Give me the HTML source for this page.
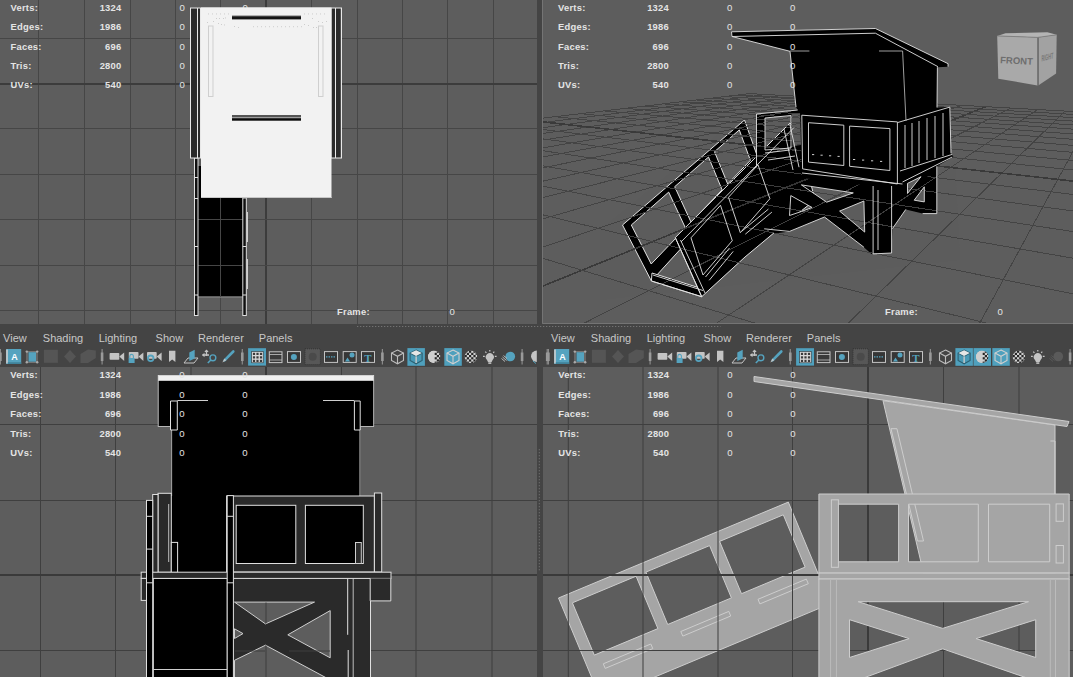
<!DOCTYPE html>
<html><head><meta charset="utf-8">
<style>
html,body{margin:0;padding:0}
body{width:1073px;height:677px;background:#444444;position:relative;overflow:hidden;font-family:"Liberation Sans",sans-serif}
.vp{position:absolute;background:#5d5d5d;overflow:hidden}
svg{position:absolute;left:0;top:0}
.hl{font:bold 9.4px "Liberation Sans",sans-serif;fill:#e4e4e4;letter-spacing:0.25px}
.hz{font:9.6px "Liberation Sans",sans-serif;fill:#e4e4e4}
.mn{font:11px "Liberation Sans",sans-serif;fill:#c8c8c8}
</style></head><body>
<div class="vp" style="left:0;top:0;width:537px;height:324px">
<svg width="537" height="324">
<rect x="38" y="0" width="1" height="324" fill="#464646"/><rect x="84" y="0" width="1" height="324" fill="#464646"/><rect x="130" y="0" width="1" height="324" fill="#464646"/><rect x="175" y="0" width="1" height="324" fill="#464646"/><rect x="220" y="0" width="1" height="324" fill="#464646"/><rect x="265" y="0" width="2" height="324" fill="#3c3c3c"/><rect x="311" y="0" width="1" height="324" fill="#464646"/><rect x="357" y="0" width="1" height="324" fill="#464646"/><rect x="402" y="0" width="1" height="324" fill="#464646"/><rect x="447" y="0" width="1" height="324" fill="#464646"/><rect x="493" y="0" width="1" height="324" fill="#464646"/><rect x="0" y="38" width="537" height="1" fill="#464646"/><rect x="0" y="83" width="537" height="2" fill="#3c3c3c"/><rect x="0" y="128" width="537" height="1" fill="#464646"/><rect x="0" y="174" width="537" height="1" fill="#464646"/><rect x="0" y="219" width="537" height="1" fill="#464646"/><rect x="0" y="265" width="537" height="1" fill="#464646"/><rect x="0" y="310" width="537" height="1" fill="#464646"/>
<text x="10.5" y="10.7" class="hl">Verts:</text><text x="121.5" y="10.7" class="hl" text-anchor="end">1324</text><text x="179.5" y="10.7" class="hz">0</text><text x="242.5" y="10.7" class="hz">0</text><text x="10.5" y="30.1" class="hl">Edges:</text><text x="121.5" y="30.1" class="hl" text-anchor="end">1986</text><text x="179.5" y="30.1" class="hz">0</text><text x="242.5" y="30.1" class="hz">0</text><text x="10.5" y="49.5" class="hl">Faces:</text><text x="121.5" y="49.5" class="hl" text-anchor="end">696</text><text x="179.5" y="49.5" class="hz">0</text><text x="242.5" y="49.5" class="hz">0</text><text x="10.5" y="68.9" class="hl">Tris:</text><text x="121.5" y="68.9" class="hl" text-anchor="end">2800</text><text x="179.5" y="68.9" class="hz">0</text><text x="242.5" y="68.9" class="hz">0</text><text x="10.5" y="88.3" class="hl">UVs:</text><text x="121.5" y="88.3" class="hl" text-anchor="end">540</text><text x="179.5" y="88.3" class="hz">0</text><text x="242.5" y="88.3" class="hz">0</text>
<g id="tlm">
<!-- lower black part (stairs seen from top) -->
<rect x="198" y="160" width="45" height="137.5" fill="#000"/>
<rect x="198" y="296.5" width="45" height="1" fill="#bdbdbd"/>
<rect x="198" y="160" width="3" height="6" fill="#5a5a5a"/>
<!-- grid lines over black -->
<rect x="220" y="198" width="1" height="99" fill="#464646"/>
<rect x="198" y="219" width="45" height="1" fill="#464646"/>
<rect x="198" y="265" width="45" height="1" fill="#464646"/>
<!-- rails -->
<rect x="194.5" y="158" width="3.5" height="157.5" fill="#101010" stroke="#e0e0e0" stroke-width="1"/>
<rect x="194.5" y="177" width="3.5" height="1" fill="#e0e0e0"/>
<rect x="194.5" y="198" width="3.5" height="1" fill="#e0e0e0"/>
<rect x="194.5" y="246" width="3.5" height="1" fill="#e0e0e0"/>
<rect x="194.5" y="294.5" width="3.5" height="1" fill="#e0e0e0"/>
<rect x="242.8" y="198" width="3.5" height="117.5" fill="#101010" stroke="#e0e0e0" stroke-width="1"/>
<rect x="242.8" y="246" width="3.5" height="1" fill="#e0e0e0"/>
<rect x="242.8" y="294.5" width="3.5" height="1" fill="#e0e0e0"/>
<rect x="246.5" y="212" width="1.5" height="30" fill="#cfcfcf"/>
<rect x="246.5" y="259" width="1.5" height="30" fill="#cfcfcf"/>
<!-- roof -->
<rect x="190" y="7.5" width="152" height="151" fill="#e8e8e8"/>
<rect x="191" y="8.5" width="6" height="149" fill="#2a2a2a"/>
<rect x="198" y="8.5" width="2" height="149" fill="#2a2a2a"/>
<rect x="331.5" y="8.5" width="3.5" height="149" fill="#2a2a2a"/>
<rect x="336" y="8.5" width="4.8" height="149" fill="#2a2a2a"/>
<rect x="201" y="7.5" width="130.5" height="190.5" fill="#f2f2f2"/>
<rect x="201" y="197" width="130.5" height="1" fill="#c8c8c8"/>
<rect x="253" y="26.3" width="0.9" height="0.9" fill="#c4c4c4"/><rect x="257" y="26.3" width="0.9" height="0.9" fill="#c4c4c4"/><rect x="261" y="26.3" width="0.9" height="0.9" fill="#c4c4c4"/><rect x="265" y="26.3" width="0.9" height="0.9" fill="#c4c4c4"/><rect x="269" y="26.3" width="0.9" height="0.9" fill="#c4c4c4"/><rect x="273" y="26.3" width="0.9" height="0.9" fill="#c4c4c4"/><rect x="277" y="26.3" width="0.9" height="0.9" fill="#c4c4c4"/><rect x="281" y="26.3" width="0.9" height="0.9" fill="#c4c4c4"/><rect x="285" y="26.3" width="0.9" height="0.9" fill="#c4c4c4"/><rect x="289" y="26.3" width="0.9" height="0.9" fill="#c4c4c4"/><rect x="293" y="26.3" width="0.9" height="0.9" fill="#c4c4c4"/><rect x="297" y="26.3" width="0.9" height="0.9" fill="#c4c4c4"/><rect x="301" y="26.3" width="0.9" height="0.9" fill="#c4c4c4"/><rect x="208" y="13.5" width="0.9" height="0.9" fill="#c4c4c4"/><rect x="212" y="13.5" width="0.9" height="0.9" fill="#c4c4c4"/><rect x="216" y="13.5" width="0.9" height="0.9" fill="#c4c4c4"/><rect x="220" y="13.5" width="0.9" height="0.9" fill="#c4c4c4"/><rect x="224" y="13.5" width="0.9" height="0.9" fill="#c4c4c4"/><rect x="228" y="13.5" width="0.9" height="0.9" fill="#c4c4c4"/><rect x="304" y="13.5" width="0.9" height="0.9" fill="#c4c4c4"/><rect x="308" y="13.5" width="0.9" height="0.9" fill="#c4c4c4"/><rect x="312" y="13.5" width="0.9" height="0.9" fill="#c4c4c4"/><rect x="316" y="13.5" width="0.9" height="0.9" fill="#c4c4c4"/><rect x="320" y="13.5" width="0.9" height="0.9" fill="#c4c4c4"/><rect x="324" y="13.5" width="0.9" height="0.9" fill="#c4c4c4"/><rect x="216" y="18" width="0.9" height="0.9" fill="#c4c4c4"/><rect x="219" y="18" width="0.9" height="0.9" fill="#c4c4c4"/><rect x="223" y="18" width="0.9" height="0.9" fill="#c4c4c4"/><rect x="225" y="17.5" width="0.9" height="0.9" fill="#c4c4c4"/><rect x="207" y="22" width="0.9" height="0.9" fill="#c4c4c4"/><rect x="213" y="21" width="0.9" height="0.9" fill="#c4c4c4"/><rect x="218" y="23" width="0.9" height="0.9" fill="#c4c4c4"/><rect x="221" y="24" width="0.9" height="0.9" fill="#c4c4c4"/><rect x="224" y="24.5" width="0.9" height="0.9" fill="#c4c4c4"/><rect x="234" y="26" width="0.9" height="0.9" fill="#c4c4c4"/><rect x="238" y="27" width="0.9" height="0.9" fill="#c4c4c4"/><rect x="312" y="18" width="0.9" height="0.9" fill="#c4c4c4"/><rect x="318" y="21" width="0.9" height="0.9" fill="#c4c4c4"/><rect x="322" y="22" width="0.9" height="0.9" fill="#c4c4c4"/><rect x="326" y="21" width="0.9" height="0.9" fill="#c4c4c4"/><rect x="304" y="24" width="0.9" height="0.9" fill="#c4c4c4"/><rect x="308" y="25" width="0.9" height="0.9" fill="#c4c4c4"/><rect x="313" y="27" width="0.9" height="0.9" fill="#c4c4c4"/><rect x="316" y="27" width="0.9" height="0.9" fill="#c4c4c4"/>
<rect x="208.5" y="26" width="4.5" height="70.5" fill="#f2f2f2" stroke="#cfcfcf" stroke-width="1"/>
<rect x="318.5" y="26" width="4.5" height="70.5" fill="#f2f2f2" stroke="#cfcfcf" stroke-width="1"/>
<rect x="232" y="15.8" width="69" height="3.6" fill="#151515"/>
<rect x="232" y="15.8" width="69" height="0.7" fill="#6a6a6a"/>
<rect x="232" y="115" width="69" height="2.5" fill="#555"/>
<rect x="232" y="117.5" width="69" height="0.8" fill="#9a9a9a"/>
<rect x="232" y="118.2" width="69" height="2.5" fill="#0a0a0a"/>
</g>

<text x="337" y="315.3" class="hl">Frame:</text><text x="449.5" y="315.3" class="hz">0</text>
</svg></div>
<div class="vp" style="left:542px;top:0;width:531px;height:324px">
<svg width="531" height="324">
<line shape-rendering="crispEdges" x1="207.8" y1="93.6" x2="-874.9" y2="222.0" stroke="#444444" stroke-width="1.0"/><line shape-rendering="crispEdges" x1="223.7" y1="94.5" x2="-887.1" y2="234.6" stroke="#444444" stroke-width="1.0"/><line shape-rendering="crispEdges" x1="240.1" y1="95.4" x2="-901.1" y2="249.2" stroke="#444444" stroke-width="1.0"/><line shape-rendering="crispEdges" x1="257.2" y1="96.4" x2="-917.4" y2="266.2" stroke="#444444" stroke-width="1.0"/><line shape-rendering="crispEdges" x1="274.8" y1="97.4" x2="-936.7" y2="286.2" stroke="#444444" stroke-width="1.0"/><line shape-rendering="crispEdges" x1="293.2" y1="98.4" x2="-959.8" y2="310.2" stroke="#444444" stroke-width="1.0"/><line shape-rendering="crispEdges" x1="312.2" y1="99.4" x2="-987.9" y2="339.5" stroke="#444444" stroke-width="1.0"/><line shape-rendering="crispEdges" x1="332.0" y1="100.5" x2="-1023.0" y2="375.9" stroke="#444444" stroke-width="1.0"/><line shape-rendering="crispEdges" x1="352.6" y1="101.7" x2="-1067.9" y2="422.6" stroke="#444444" stroke-width="1.0"/><line shape-rendering="crispEdges" x1="374.0" y1="102.8" x2="-1127.4" y2="484.5" stroke="#444444" stroke-width="1.0"/><line shape-rendering="crispEdges" x1="396.2" y1="104.1" x2="-1210.2" y2="570.6" stroke="#444444" stroke-width="1.0"/><line shape-rendering="crispEdges" x1="419.5" y1="105.4" x2="-1333.1" y2="698.4" stroke="#444444" stroke-width="1.0"/><line shape-rendering="crispEdges" x1="443.7" y1="106.7" x2="-1534.6" y2="907.9" stroke="#3a3a3a" stroke-width="1.6"/><line shape-rendering="crispEdges" x1="469.0" y1="108.1" x2="-1925.6" y2="1314.5" stroke="#444444" stroke-width="1.0"/><line shape-rendering="crispEdges" x1="495.5" y1="109.6" x2="-1641.5" y2="1531.7" stroke="#444444" stroke-width="1.0"/><line shape-rendering="crispEdges" x1="523.1" y1="111.1" x2="-932.3" y2="1534.7" stroke="#444444" stroke-width="1.0"/><line shape-rendering="crispEdges" x1="552.1" y1="112.7" x2="-223.1" y2="1537.7" stroke="#444444" stroke-width="1.0"/><line shape-rendering="crispEdges" x1="582.5" y1="114.4" x2="486.1" y2="1540.7" stroke="#444444" stroke-width="1.0"/><line shape-rendering="crispEdges" x1="614.3" y1="116.1" x2="1195.3" y2="1543.7" stroke="#444444" stroke-width="1.0"/><line shape-rendering="crispEdges" x1="647.8" y1="118.0" x2="1904.5" y2="1546.7" stroke="#444444" stroke-width="1.0"/><line shape-rendering="crispEdges" x1="683.1" y1="119.9" x2="2613.6" y2="1549.7" stroke="#444444" stroke-width="1.0"/><line shape-rendering="crispEdges" x1="720.2" y1="122.0" x2="3322.8" y2="1552.7" stroke="#444444" stroke-width="1.0"/><line shape-rendering="crispEdges" x1="759.4" y1="124.2" x2="4032.0" y2="1555.7" stroke="#444444" stroke-width="1.0"/><line shape-rendering="crispEdges" x1="800.8" y1="126.5" x2="4741.2" y2="1558.7" stroke="#444444" stroke-width="1.0"/><line shape-rendering="crispEdges" x1="844.6" y1="128.9" x2="5450.4" y2="1561.7" stroke="#444444" stroke-width="1.0"/><line shape-rendering="crispEdges" x1="207.8" y1="93.6" x2="844.6" y2="128.9" stroke="#444444" stroke-width="1.0"/><line shape-rendering="crispEdges" x1="195.7" y1="95.1" x2="858.9" y2="133.3" stroke="#444444" stroke-width="1.0"/><line shape-rendering="crispEdges" x1="182.8" y1="96.6" x2="874.8" y2="138.3" stroke="#444444" stroke-width="1.0"/><line shape-rendering="crispEdges" x1="169.1" y1="98.2" x2="892.7" y2="143.9" stroke="#444444" stroke-width="1.0"/><line shape-rendering="crispEdges" x1="154.4" y1="100.0" x2="913.0" y2="150.2" stroke="#444444" stroke-width="1.0"/><line shape-rendering="crispEdges" x1="138.6" y1="101.8" x2="936.2" y2="157.4" stroke="#444444" stroke-width="1.0"/><line shape-rendering="crispEdges" x1="121.6" y1="103.9" x2="962.9" y2="165.7" stroke="#444444" stroke-width="1.0"/><line shape-rendering="crispEdges" x1="103.3" y1="106.0" x2="994.1" y2="175.4" stroke="#444444" stroke-width="1.0"/><line shape-rendering="crispEdges" x1="83.5" y1="108.4" x2="1030.9" y2="186.8" stroke="#444444" stroke-width="1.0"/><line shape-rendering="crispEdges" x1="62.0" y1="110.9" x2="1075.0" y2="200.5" stroke="#444444" stroke-width="1.0"/><line shape-rendering="crispEdges" x1="38.5" y1="113.7" x2="1128.8" y2="217.3" stroke="#444444" stroke-width="1.0"/><line shape-rendering="crispEdges" x1="12.9" y1="116.7" x2="1195.9" y2="238.2" stroke="#444444" stroke-width="1.0"/><line shape-rendering="crispEdges" x1="-15.2" y1="120.1" x2="1282.1" y2="265.0" stroke="#3a3a3a" stroke-width="1.6"/><line shape-rendering="crispEdges" x1="-46.2" y1="123.7" x2="1396.6" y2="300.6" stroke="#444444" stroke-width="1.0"/><line shape-rendering="crispEdges" x1="-80.6" y1="127.8" x2="1556.3" y2="350.3" stroke="#444444" stroke-width="1.0"/><line shape-rendering="crispEdges" x1="-119.0" y1="132.4" x2="1794.5" y2="424.4" stroke="#444444" stroke-width="1.0"/><line shape-rendering="crispEdges" x1="-162.0" y1="137.5" x2="2187.8" y2="546.7" stroke="#444444" stroke-width="1.0"/><line shape-rendering="crispEdges" x1="-210.6" y1="143.2" x2="2961.2" y2="787.3" stroke="#444444" stroke-width="1.0"/><line shape-rendering="crispEdges" x1="-266.0" y1="149.8" x2="5180.0" y2="1477.6" stroke="#444444" stroke-width="1.0"/><line shape-rendering="crispEdges" x1="-329.6" y1="157.3" x2="4249.9" y2="1556.7" stroke="#444444" stroke-width="1.0"/><line shape-rendering="crispEdges" x1="-403.5" y1="166.1" x2="2973.4" y2="1551.2" stroke="#444444" stroke-width="1.0"/><line shape-rendering="crispEdges" x1="-490.4" y1="176.4" x2="1697.0" y2="1545.8" stroke="#444444" stroke-width="1.0"/><line shape-rendering="crispEdges" x1="-593.9" y1="188.7" x2="420.5" y2="1540.4" stroke="#444444" stroke-width="1.0"/><line shape-rendering="crispEdges" x1="-719.5" y1="203.5" x2="-856.0" y2="1535.0" stroke="#444444" stroke-width="1.0"/><line shape-rendering="crispEdges" x1="-874.9" y1="222.0" x2="-2132.4" y2="1529.6" stroke="#444444" stroke-width="1.0"/>
<g transform="translate(-542,0)"><path d="M622.5 225.0 L744.5 120.0 L759.5 162.4 L651.4 281.0 Z M631.3 225.0 L668.7 192.1 L685.5 228.1 L651.2 264.0 Z M674.7 186.7 L708.5 157.0 L722.1 189.8 L691.1 222.3 Z M714.5 151.7 L739.3 129.9 L750.4 160.3 L727.7 184.0 Z" fill="#000" fill-rule="evenodd" stroke="#e2e2e2" stroke-width="1"/><path d="M651.4 281.0 L701.7 296.7 L703.0 289.0 L652.0 273.0 Z" fill="#000" stroke="#e2e2e2" stroke-width="1"/><path d="M675.3 237.6 L789.7 123.3 L796.0 126.0 L815.0 200.0 L784.4 224.2 L745.0 257.0 L701.7 296.7 Z" fill="#000" stroke="#e2e2e2" stroke-width="1"/><path d="M731.5 31.8 L875.4 28.5 L948.1 63.7 L948.0 66.7 L937.4 67.2 L937.0 107.5 L949.8 107.1 L951.0 153.3 L953.4 156.8 L936.8 166.3 L936.8 213.6 L922.6 213.6 L905.8 209.4 L892.4 228.7 L891.6 253.0 L871.4 253.9 L863.9 247.2 L824.5 217.0 L789.5 231.4 L774.9 233.4 L764.2 228.8 L750.0 236.0 L756.5 165.0 L756.5 114.0 L797.7 110.0 L796.0 107.0 L795.3 100.0 L790.0 51.3 L732.0 36.5 Z M765.0 118.0 L791.0 115.5 L791.0 148.0 L765.0 150.0 Z M801.4 184.9 L853.3 192.9 L826.7 202.2 Z M790.8 195.6 L812.1 207.5 L801.4 211.5 L789.5 215.5 Z M839.6 211.1 L863.9 201.0 L864.7 232.1 Z M907.5 183.4 L921.0 176.7 L907.5 193.5 Z M914.2 200.2 L924.3 186.8 L924.3 201.9 Z" fill="#000" fill-rule="evenodd"/><path d="M791.5 114 L800 113 L801 145 L792.5 146 Z" fill="#5a5a5a"/><clipPath id="lowclip"><path d="M600 230 L760 100 L800 112 L802 178 L905 190 L955 160 L960 260 L600 300 Z"/></clipPath><g clip-path="url(#lowclip)" opacity="0.9"><g transform="translate(542,0)"><line shape-rendering="crispEdges" x1="207.8" y1="93.6" x2="-874.9" y2="222.0" stroke="#444444" stroke-width="1.0"/><line shape-rendering="crispEdges" x1="223.7" y1="94.5" x2="-887.1" y2="234.6" stroke="#444444" stroke-width="1.0"/><line shape-rendering="crispEdges" x1="240.1" y1="95.4" x2="-901.1" y2="249.2" stroke="#444444" stroke-width="1.0"/><line shape-rendering="crispEdges" x1="257.2" y1="96.4" x2="-917.4" y2="266.2" stroke="#444444" stroke-width="1.0"/><line shape-rendering="crispEdges" x1="274.8" y1="97.4" x2="-936.7" y2="286.2" stroke="#444444" stroke-width="1.0"/><line shape-rendering="crispEdges" x1="293.2" y1="98.4" x2="-959.8" y2="310.2" stroke="#444444" stroke-width="1.0"/><line shape-rendering="crispEdges" x1="312.2" y1="99.4" x2="-987.9" y2="339.5" stroke="#444444" stroke-width="1.0"/><line shape-rendering="crispEdges" x1="332.0" y1="100.5" x2="-1023.0" y2="375.9" stroke="#444444" stroke-width="1.0"/><line shape-rendering="crispEdges" x1="352.6" y1="101.7" x2="-1067.9" y2="422.6" stroke="#444444" stroke-width="1.0"/><line shape-rendering="crispEdges" x1="374.0" y1="102.8" x2="-1127.4" y2="484.5" stroke="#444444" stroke-width="1.0"/><line shape-rendering="crispEdges" x1="396.2" y1="104.1" x2="-1210.2" y2="570.6" stroke="#444444" stroke-width="1.0"/><line shape-rendering="crispEdges" x1="419.5" y1="105.4" x2="-1333.1" y2="698.4" stroke="#444444" stroke-width="1.0"/><line shape-rendering="crispEdges" x1="443.7" y1="106.7" x2="-1534.6" y2="907.9" stroke="#3a3a3a" stroke-width="1.6"/><line shape-rendering="crispEdges" x1="469.0" y1="108.1" x2="-1925.6" y2="1314.5" stroke="#444444" stroke-width="1.0"/><line shape-rendering="crispEdges" x1="495.5" y1="109.6" x2="-1641.5" y2="1531.7" stroke="#444444" stroke-width="1.0"/><line shape-rendering="crispEdges" x1="523.1" y1="111.1" x2="-932.3" y2="1534.7" stroke="#444444" stroke-width="1.0"/><line shape-rendering="crispEdges" x1="552.1" y1="112.7" x2="-223.1" y2="1537.7" stroke="#444444" stroke-width="1.0"/><line shape-rendering="crispEdges" x1="582.5" y1="114.4" x2="486.1" y2="1540.7" stroke="#444444" stroke-width="1.0"/><line shape-rendering="crispEdges" x1="614.3" y1="116.1" x2="1195.3" y2="1543.7" stroke="#444444" stroke-width="1.0"/><line shape-rendering="crispEdges" x1="647.8" y1="118.0" x2="1904.5" y2="1546.7" stroke="#444444" stroke-width="1.0"/><line shape-rendering="crispEdges" x1="683.1" y1="119.9" x2="2613.6" y2="1549.7" stroke="#444444" stroke-width="1.0"/><line shape-rendering="crispEdges" x1="720.2" y1="122.0" x2="3322.8" y2="1552.7" stroke="#444444" stroke-width="1.0"/><line shape-rendering="crispEdges" x1="759.4" y1="124.2" x2="4032.0" y2="1555.7" stroke="#444444" stroke-width="1.0"/><line shape-rendering="crispEdges" x1="800.8" y1="126.5" x2="4741.2" y2="1558.7" stroke="#444444" stroke-width="1.0"/><line shape-rendering="crispEdges" x1="844.6" y1="128.9" x2="5450.4" y2="1561.7" stroke="#444444" stroke-width="1.0"/><line shape-rendering="crispEdges" x1="207.8" y1="93.6" x2="844.6" y2="128.9" stroke="#444444" stroke-width="1.0"/><line shape-rendering="crispEdges" x1="195.7" y1="95.1" x2="858.9" y2="133.3" stroke="#444444" stroke-width="1.0"/><line shape-rendering="crispEdges" x1="182.8" y1="96.6" x2="874.8" y2="138.3" stroke="#444444" stroke-width="1.0"/><line shape-rendering="crispEdges" x1="169.1" y1="98.2" x2="892.7" y2="143.9" stroke="#444444" stroke-width="1.0"/><line shape-rendering="crispEdges" x1="154.4" y1="100.0" x2="913.0" y2="150.2" stroke="#444444" stroke-width="1.0"/><line shape-rendering="crispEdges" x1="138.6" y1="101.8" x2="936.2" y2="157.4" stroke="#444444" stroke-width="1.0"/><line shape-rendering="crispEdges" x1="121.6" y1="103.9" x2="962.9" y2="165.7" stroke="#444444" stroke-width="1.0"/><line shape-rendering="crispEdges" x1="103.3" y1="106.0" x2="994.1" y2="175.4" stroke="#444444" stroke-width="1.0"/><line shape-rendering="crispEdges" x1="83.5" y1="108.4" x2="1030.9" y2="186.8" stroke="#444444" stroke-width="1.0"/><line shape-rendering="crispEdges" x1="62.0" y1="110.9" x2="1075.0" y2="200.5" stroke="#444444" stroke-width="1.0"/><line shape-rendering="crispEdges" x1="38.5" y1="113.7" x2="1128.8" y2="217.3" stroke="#444444" stroke-width="1.0"/><line shape-rendering="crispEdges" x1="12.9" y1="116.7" x2="1195.9" y2="238.2" stroke="#444444" stroke-width="1.0"/><line shape-rendering="crispEdges" x1="-15.2" y1="120.1" x2="1282.1" y2="265.0" stroke="#3a3a3a" stroke-width="1.6"/><line shape-rendering="crispEdges" x1="-46.2" y1="123.7" x2="1396.6" y2="300.6" stroke="#444444" stroke-width="1.0"/><line shape-rendering="crispEdges" x1="-80.6" y1="127.8" x2="1556.3" y2="350.3" stroke="#444444" stroke-width="1.0"/><line shape-rendering="crispEdges" x1="-119.0" y1="132.4" x2="1794.5" y2="424.4" stroke="#444444" stroke-width="1.0"/><line shape-rendering="crispEdges" x1="-162.0" y1="137.5" x2="2187.8" y2="546.7" stroke="#444444" stroke-width="1.0"/><line shape-rendering="crispEdges" x1="-210.6" y1="143.2" x2="2961.2" y2="787.3" stroke="#444444" stroke-width="1.0"/><line shape-rendering="crispEdges" x1="-266.0" y1="149.8" x2="5180.0" y2="1477.6" stroke="#444444" stroke-width="1.0"/><line shape-rendering="crispEdges" x1="-329.6" y1="157.3" x2="4249.9" y2="1556.7" stroke="#444444" stroke-width="1.0"/><line shape-rendering="crispEdges" x1="-403.5" y1="166.1" x2="2973.4" y2="1551.2" stroke="#444444" stroke-width="1.0"/><line shape-rendering="crispEdges" x1="-490.4" y1="176.4" x2="1697.0" y2="1545.8" stroke="#444444" stroke-width="1.0"/><line shape-rendering="crispEdges" x1="-593.9" y1="188.7" x2="420.5" y2="1540.4" stroke="#444444" stroke-width="1.0"/><line shape-rendering="crispEdges" x1="-719.5" y1="203.5" x2="-856.0" y2="1535.0" stroke="#444444" stroke-width="1.0"/><line shape-rendering="crispEdges" x1="-874.9" y1="222.0" x2="-2132.4" y2="1529.6" stroke="#444444" stroke-width="1.0"/></g></g><path d="M681.0 242.0 L794.0 127.5 M651.5 281.0 L701.7 296.7 M653.0 275.0 L703.0 290.5 M675.3 237.6 L701.7 296.7 M680.5 240.0 L705.0 293.0 M691.0 237.8 L720.5 205.3 L732.3 240.7 L703.0 275.0 Z M728.5 197.3 L758.0 164.8 L769.9 198.7 L740.3 232.7 Z M741.8 231.2 L768.4 209.1 M745.3 234.2 L771.9 212.1 M709.2 280.3 L733.2 251.4 M705.5 277.0 L729.5 248.0 M789.7 123.3 L799.0 167.2 M784.0 129.0 L793.0 170.0 M765.0 153.0 L790.0 150.0 M768.0 160.0 L795.0 156.0 M731.5 31.8 L875.4 28.5 L948.1 63.7 L948.0 66.7 M732.0 36.5 L875.4 33.2 L938.0 66.7 M732.0 36.5 L790.0 51.3 L796.0 107.0 M937.4 67.2 L937.0 107.5 M731.5 31.8 L732.0 36.5 M801.8 115.2 L897.4 121.9 L897.4 184.0 L802.6 168.9 Z M808.5 122.7 L843.8 125.2 L843.8 165.5 L808.5 162.1 Z M849.6 126.1 L889.9 128.6 L889.9 170.5 L849.6 166.3 Z M802.0 173.0 L902.5 184.0 M902.5 182.0 L952.2 157.0 M897.8 122.5 L949.8 107.1 L951.0 153.3 M900.0 171.0 L952.2 154.4 M905.0 125.0 L905.0 168.0 M912.0 123.0 L912.0 166.0 M919.0 121.0 L919.0 163.0 M927.0 118.0 L927.0 160.0 M935.0 116.0 L935.0 158.0 M943.0 113.0 L943.0 156.0 M756.5 165.0 L756.5 114.0 L797.7 110.0 M765.0 118.0 L791.0 115.5 L791.0 148.0 L765.0 150.0 Z M873.1 186.0 L873.1 253.9 L891.6 253.0 L891.6 186.0 M878.0 190.0 L878.0 250.0 M936.8 166.3 L936.8 213.6 L922.6 213.6 M905.8 209.4 L892.4 228.7 M801.4 184.9 L853.3 192.9 L826.7 202.2 Z M790.8 195.6 L812.1 207.5 L801.4 211.5 L789.5 215.5 Z M839.6 211.1 L863.9 201.0 L864.7 232.1 Z M907.5 183.4 L921.0 176.7 L907.5 193.5 Z M914.2 200.2 L924.3 186.8 L924.3 201.9 Z M824.5 217.0 L863.9 247.2 M764.2 228.8 L789.5 231.4 L824.5 217.0" fill="none" stroke="#e2e2e2" stroke-width="0.9"/><path d="M812 154.6 h2.2 M820.5 155.2 h2.2 M829 155.8 h2.2 M837.5 156.4 h2.2 M853 159.5 h2.2 M862 160.1 h2.2 M871 160.8 h2.2 M880 161.4 h2.2" stroke="#cfcfcf" stroke-width="1"/><path d="M790 51 H809.4 M879 51 H902.6 L906 121" fill="none" stroke="#b0b0b0" stroke-width="0.9"/><g id="vc">
<path d="M1005.5 33.3 L1047.4 32.2 L1056.7 34.8 L1038.6 37.4 L997.2 35.9 Z" fill="#b4b4b4"/>
<path d="M997.2 35.9 L1037.5 37.4 L1037.5 85.5 L998.3 78.7 Z" fill="#a9a9a9"/>
<path d="M1038.6 37.4 L1056.7 34.8 L1056.1 73.6 L1038.6 85.2 Z" fill="#a2a2a2"/>
<path d="M1038 37.4 V85.5" stroke="#707070" stroke-width="1.2"/>
<path d="M997.2 35.9 L1037.5 37.4 L1056.7 34.8" fill="none" stroke="#7a7a7a" stroke-width="0.8"/>
<text x="1016.6" y="64" font-family="Liberation Sans" font-weight="bold" font-size="9.5" fill="#6e6e6e" text-anchor="middle" transform="rotate(3 1016.6 60)">FRONT</text>
<text x="0" y="0" font-family="Liberation Sans" font-weight="bold" font-size="8.5" fill="#787878" transform="matrix(0.45,-0.12,0,1,1041.5,61.5)">RIGHT</text>
</g>
</g>
<g transform="translate(-542,0)"><text x="558" y="10.7" class="hl">Verts:</text><text x="669" y="10.7" class="hl" text-anchor="end">1324</text><text x="727" y="10.7" class="hz">0</text><text x="790" y="10.7" class="hz">0</text><text x="558" y="30.1" class="hl">Edges:</text><text x="669" y="30.1" class="hl" text-anchor="end">1986</text><text x="727" y="30.1" class="hz">0</text><text x="790" y="30.1" class="hz">0</text><text x="558" y="49.5" class="hl">Faces:</text><text x="669" y="49.5" class="hl" text-anchor="end">696</text><text x="727" y="49.5" class="hz">0</text><text x="790" y="49.5" class="hz">0</text><text x="558" y="68.9" class="hl">Tris:</text><text x="669" y="68.9" class="hl" text-anchor="end">2800</text><text x="727" y="68.9" class="hz">0</text><text x="790" y="68.9" class="hz">0</text><text x="558" y="88.3" class="hl">UVs:</text><text x="669" y="88.3" class="hl" text-anchor="end">540</text><text x="727" y="88.3" class="hz">0</text><text x="790" y="88.3" class="hz">0</text>
<text x="885" y="315.3" class="hl">Frame:</text><text x="997.5" y="315.3" class="hz">0</text></g>
<path d="M0.5 0 V323.5 H531" fill="none" stroke="#747474" stroke-width="1"/>
</svg></div>
<div class="vp" style="left:0;top:367px;width:537px;height:310px">
<svg width="537" height="310">
<rect x="40" y="0" width="1" height="310" fill="#3f3f3f"/><rect x="115" y="0" width="1" height="310" fill="#3f3f3f"/><rect x="190.5" y="0" width="1" height="310" fill="#3f3f3f"/><rect x="265" y="0" width="2" height="310" fill="#3a3a3a"/><rect x="341" y="0" width="1" height="310" fill="#3f3f3f"/><rect x="415.5" y="0" width="1" height="310" fill="#3f3f3f"/><rect x="491.5" y="0" width="1" height="310" fill="#3f3f3f"/><rect x="0" y="57" width="537" height="1" fill="#3f3f3f"/><rect x="0" y="133" width="537" height="1" fill="#3f3f3f"/><rect x="0" y="207" width="537" height="2" fill="#3a3a3a"/><rect x="0" y="283" width="537" height="1" fill="#3f3f3f"/>
<g id="blm" transform="translate(0,-367)">
<!-- roof -->
<rect x="158.2" y="375.5" width="215.5" height="51" fill="#000" stroke="#d8d8d8" stroke-width="0.8"/>
<rect x="158.2" y="375.5" width="215.5" height="5.3" fill="#f0f0f0"/>
<!-- cabin -->
<rect x="171.3" y="426" width="189" height="147" fill="#000"/>
<rect x="171.3" y="426" width="0.8" height="70" fill="#cfcfcf"/>
<rect x="359.5" y="426" width="0.8" height="70" fill="#cfcfcf"/>
<path d="M170.5 430 V401 H177.3 V430 Z" fill="#000" stroke="#e0e0e0" stroke-width="1"/>
<path d="M177.3 400.5 H208" stroke="#d0d0d0" stroke-width="1"/>
<path d="M354.4 430 V401 H360.2 V430 Z" fill="#000" stroke="#e0e0e0" stroke-width="1"/>
<path d="M323 400.5 H354.4" stroke="#d0d0d0" stroke-width="1"/>
<!-- left structures -->
<rect x="158" y="493.3" width="13.3" height="79" fill="#2a2a2a" stroke="#e0e0e0" stroke-width="1"/>
<path d="M168.7 504 V562" stroke="#bdbdbd" stroke-width="1"/>
<rect x="152.7" y="494.5" width="5.3" height="78" fill="#2a2a2a" stroke="#e0e0e0" stroke-width="1"/>
<rect x="171.3" y="542.4" width="6.3" height="30" fill="#000" stroke="#e0e0e0" stroke-width="1"/>
<!-- front railing panel -->
<rect x="226.6" y="496" width="147.8" height="76" fill="#2a2a2a" stroke="#e0e0e0" stroke-width="1"/>
<rect x="236.2" y="505.3" width="59.6" height="58.2" fill="#000" stroke="#e0e0e0" stroke-width="1"/>
<rect x="305.4" y="505.3" width="57.9" height="58.2" fill="#000" stroke="#e0e0e0" stroke-width="1"/>
<rect x="355.5" y="542.5" width="5.8" height="21" fill="#2a2a2a" stroke="#cfcfcf" stroke-width="1"/>
<rect x="374.4" y="493" width="7.3" height="79" fill="#2a2a2a" stroke="#e0e0e0" stroke-width="1"/>
<!-- lower -->
<rect x="153.3" y="578.4" width="74" height="100" fill="#000" stroke="#e0e0e0" stroke-width="1"/>
<path d="M153.3 669.5 H227.2" stroke="#cfcfcf" stroke-width="1"/>
<!-- X brace -->
<rect x="233.4" y="578.4" width="137" height="100" fill="#2a2a2a"/>
<path d="M234.5 602.1 L314.5 602.1 L265.5 623.9 Z" fill="#5d5d5d" stroke="#cfcfcf" stroke-width="1"/>
<path d="M287.8 634.8 L330.2 610.6 L330.2 657.8 Z" fill="#5d5d5d" stroke="#cfcfcf" stroke-width="1"/>
<path d="M234.5 628.8 L243 633.6 L234.5 638.5 Z" fill="#5d5d5d" stroke="#cfcfcf" stroke-width="1"/>
<path d="M234.5 660.3 L265.5 645.2 L326.6 678 L234.5 678 Z" fill="#5d5d5d" stroke="#cfcfcf" stroke-width="1"/>
<rect x="265.5" y="602.5" width="1" height="21" fill="#3f3f3f"/>
<rect x="265.5" y="645.5" width="1" height="33" fill="#3f3f3f"/>
<rect x="289" y="650.5" width="41" height="1" fill="#3f3f3f"/>
<rect x="235" y="650.5" width="30" height="1" fill="#3f3f3f"/>
<path d="M347.7 578.4 V634.8 M348.2 650 V678" stroke="#e0e0e0" stroke-width="1"/><path d="M370.5 600.9 V678" stroke="#e0e0e0" stroke-width="1"/>
<path d="M353.2 578.4 V678" stroke="#bdbdbd" stroke-width="1"/>
<!-- beam -->
<rect x="141.2" y="572.2" width="249.8" height="6.2" fill="#2a2a2a" stroke="#e0e0e0" stroke-width="1"/>
<rect x="141.2" y="578.4" width="5.3" height="22" fill="#2a2a2a" stroke="#e0e0e0" stroke-width="1"/>
<path d="M370.2 578.4 V600.9 H390.8 V578.4" fill="#2a2a2a" stroke="#e0e0e0" stroke-width="1"/>
<!-- posts -->
<rect x="146.5" y="500.4" width="6.2" height="178" fill="#000" stroke="#e0e0e0" stroke-width="1"/>
<path d="M146.5 516.3 H152.7 M146.5 549.1 H152.7 M146.5 582.8 H152.7" stroke="#e0e0e0" stroke-width="1"/>
<rect x="227.2" y="495.6" width="6.2" height="183" fill="#000" stroke="#e0e0e0" stroke-width="1"/>
<path d="M227.2 516.3 H233.4 M227.2 582.8 H233.4" stroke="#e0e0e0" stroke-width="1"/>
</g>

<g transform="translate(0,-367)"><text x="10.3" y="378.3" class="hl">Verts:</text><text x="121.3" y="378.3" class="hl" text-anchor="end">1324</text><text x="179.3" y="378.3" class="hz">0</text><text x="242.3" y="378.3" class="hz">0</text><text x="10.3" y="397.7" class="hl">Edges:</text><text x="121.3" y="397.7" class="hl" text-anchor="end">1986</text><text x="179.3" y="397.7" class="hz">0</text><text x="242.3" y="397.7" class="hz">0</text><text x="10.3" y="417.1" class="hl">Faces:</text><text x="121.3" y="417.1" class="hl" text-anchor="end">696</text><text x="179.3" y="417.1" class="hz">0</text><text x="242.3" y="417.1" class="hz">0</text><text x="10.3" y="436.5" class="hl">Tris:</text><text x="121.3" y="436.5" class="hl" text-anchor="end">2800</text><text x="179.3" y="436.5" class="hz">0</text><text x="242.3" y="436.5" class="hz">0</text><text x="10.3" y="455.9" class="hl">UVs:</text><text x="121.3" y="455.9" class="hl" text-anchor="end">540</text><text x="179.3" y="455.9" class="hz">0</text><text x="242.3" y="455.9" class="hz">0</text><text x="337" y="683.3" class="hl">Frame:</text><text x="449.5" y="683.3" class="hz">0</text></g>
</svg></div>
<div class="vp" style="left:543px;top:367px;width:530px;height:310px">
<svg width="530" height="310">
<g transform="translate(-543,-367)"><path d="M558.5 598.0 L788.3 502.1 L830.6 603.6 L600.9 699.5 Z M572.4 602.8 L636.1 576.2 L657.9 628.6 L594.3 655.1 Z M645.9 572.1 L709.6 545.6 L731.4 597.9 L667.7 624.5 Z M719.6 541.4 L783.3 514.8 L805.1 567.1 L741.5 593.7 Z" fill="#a5a5a5" fill-rule="evenodd" stroke="#cdcdcd" stroke-width="1"/><path d="M603.3 663.8 L650.8 644.0 L652.8 648.6 L605.2 668.4 Z" fill="#a5a5a5" stroke="#cdcdcd" stroke-width="1"/><path d="M680.8 631.5 L728.8 611.4 L730.7 616.0 L682.8 636.1 Z" fill="#a5a5a5" stroke="#cdcdcd" stroke-width="1"/><path d="M758.0 599.3 L806.3 579.1 L808.3 583.7 L759.9 603.9 Z" fill="#a5a5a5" stroke="#cdcdcd" stroke-width="1"/></g>
<rect x="24.8" y="0" width="1" height="310" fill="#3f3f3f"/><rect x="99.5" y="0" width="1" height="310" fill="#3f3f3f"/><rect x="174.5" y="0" width="1" height="310" fill="#3f3f3f"/><rect x="249" y="0" width="1" height="310" fill="#3f3f3f"/><rect x="324" y="0" width="2" height="310" fill="#3a3a3a"/><rect x="400" y="0" width="1" height="310" fill="#3f3f3f"/><rect x="475.5" y="0" width="1" height="310" fill="#3f3f3f"/><rect x="0" y="57" width="530" height="1" fill="#3f3f3f"/><rect x="0" y="133" width="530" height="1" fill="#3f3f3f"/><rect x="0" y="207" width="530" height="2" fill="#3a3a3a"/><rect x="0" y="283" width="530" height="1" fill="#3f3f3f"/>
<g transform="translate(-543,-367)"><!-- tower -->
<path d="M883 400.7 L1055 425 L1055 575 L924 575 Z" fill="#a5a5a5" stroke="#cdcdcd" stroke-width="1"/>
<path d="M891 428.7 L896.9 428.7 L923.5 541 L917.5 541 Z" fill="#a5a5a5" stroke="#cdcdcd" stroke-width="1"/>
<path d="M1050.4 441 H1055 V494" fill="none" stroke="#cdcdcd" stroke-width="1"/>
<path d="M754 376.5 L1069 421.5 L1067 426.5 L754 381.5 Z" fill="#a5a5a5" stroke="#cdcdcd" stroke-width="1"/>
<path d="M818.9 494 H1069.2 V573.1 H818.9 Z M837.8 504.2 H898.6 V561.8 H837.8 Z M908.5 504.2 H978.3 V561.8 H908.5 Z M988.5 504.2 H1049.7 V561.8 H988.5 Z" fill="#a5a5a5" fill-rule="evenodd" stroke="#cdcdcd" stroke-width="1"/>
<rect x="831.4" y="499.8" width="7" height="67.5" fill="#a5a5a5" stroke="#cdcdcd" stroke-width="1"/>
<rect x="1056.1" y="503.9" width="7.3" height="17.4" fill="#a5a5a5" stroke="#cdcdcd" stroke-width="1"/>
<rect x="1056.1" y="545.5" width="7.3" height="17.5" fill="#a5a5a5" stroke="#cdcdcd" stroke-width="1"/>
<rect x="818.9" y="573.1" width="250.3" height="6" fill="#a5a5a5" stroke="#cdcdcd" stroke-width="1"/>
<path d="M818.9 579 H1069.2 V680 H818.9 Z M858.2 601.7 L1028.5 601.7 L942.6 628.4 Z M849.5 619.7 L909.1 638.6 L849.5 657.5 Z M976.1 638.6 L1035.7 619.7 L1035.7 657.5 Z M858.2 680 L942.6 648.8 L1032.8 680 Z" fill="#a5a5a5" fill-rule="evenodd" stroke="#cdcdcd" stroke-width="1"/>
<path d="M830.6 580 V677 M836.4 580 V677 M1050.3 580 V677 M1055.5 580 V677" stroke="#c0c0c0" stroke-width="0.8"/>
</g>
<g transform="translate(-543,-367)"><text x="558.3" y="378.3" class="hl">Verts:</text><text x="669.3" y="378.3" class="hl" text-anchor="end">1324</text><text x="727.3" y="378.3" class="hz">0</text><text x="790.3" y="378.3" class="hz">0</text><text x="558.3" y="397.7" class="hl">Edges:</text><text x="669.3" y="397.7" class="hl" text-anchor="end">1986</text><text x="727.3" y="397.7" class="hz">0</text><text x="790.3" y="397.7" class="hz">0</text><text x="558.3" y="417.1" class="hl">Faces:</text><text x="669.3" y="417.1" class="hl" text-anchor="end">696</text><text x="727.3" y="417.1" class="hz">0</text><text x="790.3" y="417.1" class="hz">0</text><text x="558.3" y="436.5" class="hl">Tris:</text><text x="669.3" y="436.5" class="hl" text-anchor="end">2800</text><text x="727.3" y="436.5" class="hz">0</text><text x="790.3" y="436.5" class="hz">0</text><text x="558.3" y="455.9" class="hl">UVs:</text><text x="669.3" y="455.9" class="hl" text-anchor="end">540</text><text x="727.3" y="455.9" class="hz">0</text><text x="790.3" y="455.9" class="hz">0</text><text x="885" y="683.3" class="hl">Frame:</text><text x="997.5" y="683.3" class="hz">0</text></g>
</svg></div>
<svg width="1073" height="367" style="position:absolute;left:0;top:0"><rect x="0" y="324" width="1073" height="43" fill="#444"/><path d="M357 326.5 H720.5" stroke="#727272" stroke-width="1" stroke-dasharray="1.3 1.7"/><text x="3.1" y="342.4" class="mn">View</text><text x="42.8" y="342.4" class="mn">Shading</text><text x="98.7" y="342.4" class="mn">Lighting</text><text x="155.6" y="342.4" class="mn">Show</text><text x="198" y="342.4" class="mn">Renderer</text><text x="258.8" y="342.4" class="mn">Panels</text><text x="551.1" y="342.4" class="mn">View</text><text x="590.8" y="342.4" class="mn">Shading</text><text x="646.7" y="342.4" class="mn">Lighting</text><text x="703.6" y="342.4" class="mn">Show</text><text x="746" y="342.4" class="mn">Renderer</text><text x="806.8" y="342.4" class="mn">Panels</text><g><rect x="-0.19999999999999996" y="349" width="1.2" height="15.5" fill="#8a8a8a"/><rect x="-0.9" y="352.5" width="2.6" height="8.5" fill="#9a9a9a"/><rect x="6.2" y="349" width="15" height="15" fill="#55a3bf"/><rect x="6.2" y="349.5" width="1.6" height="14" fill="#cfcfcf"/><rect x="7.8" y="362.3" width="13.4" height="1.6" fill="#3f7f96"/><text x="14.4" y="359.5" font-family="Liberation Sans" font-weight="bold" font-size="9" fill="#fff" text-anchor="middle">A</text><rect x="27" y="351.8" width="10" height="10.4" fill="none" stroke="#8a8a8a" stroke-width="1"/><rect x="28.5" y="352.2" width="7.5" height="9.5" fill="#55a3bf"/><circle cx="26.8" cy="351.6" r="1.2" fill="#aaa"/><circle cx="26.8" cy="362.2" r="1.2" fill="#aaa"/><circle cx="37.2" cy="351.6" r="1.2" fill="#aaa"/><circle cx="37.2" cy="362.2" r="1.2" fill="#aaa"/><rect x="43.9" y="349.8" width="14" height="13" fill="#555555"/><path d="M70 350 L76 356.5 L70 363 L64 356.5 Z" fill="#555555"/><path d="M80.5 354 L88 349.5 L95.8 350.5 L95.8 358 L88 363 L80.5 363 Z" fill="#555555"/><rect x="101.5" y="349" width="1.2" height="15.5" fill="#8a8a8a"/><rect x="100.8" y="352.5" width="2.6" height="8.5" fill="#9a9a9a"/><rect x="109.6" y="353" width="9.7" height="6.8" rx="0.8" fill="#c4c4c4"/><path d="M119.3 356.5 L124.19999999999999 352.5 L124.19999999999999 361 Z" fill="#c4c4c4"/><rect x="128.8" y="351.9" width="9.7" height="6.8" rx="0.8" fill="#c4c4c4"/><path d="M138.5 356.5 L143.4 352.5 L143.4 361 Z" fill="#c4c4c4"/><rect x="128.6" y="358" width="6" height="5" fill="#55a3bf"/><path d="M129.8 358 V356.2 A1.8 1.8 0 0 1 133.4 356.2 V358" fill="none" stroke="#55a3bf" stroke-width="1.1"/><rect x="147" y="351.9" width="9.7" height="6.8" rx="0.8" fill="#c4c4c4"/><path d="M156.7 356.5 L161.6 352.5 L161.6 361 Z" fill="#c4c4c4"/><circle cx="150.7" cy="358.3" r="2.8" fill="none" stroke="#55a3bf" stroke-width="1.8"/><path d="M169 350.8 H175.4 V362.1 L172.2 359.5 L169 362.1 Z" fill="#c4c4c4"/><path d="M184 363 L188 358 L198 358 L194 363 Z" fill="none" stroke="#c4c4c4" stroke-width="1"/><path d="M189.3 352.5 L194.7 349.8 L194.7 358.5 L189.3 361 Z" fill="#55a3bf"/><path d="M202.5 355 H209 M206.5 350 V356" stroke="#c4c4c4" stroke-width="1.4"/><path d="M202 355 L204.5 352.8 L204.5 357.2 Z M206.5 349.5 L204.3 352 L208.7 352 Z" fill="#c4c4c4"/><circle cx="212.9" cy="357.8" r="2.9" fill="none" stroke="#55a3bf" stroke-width="1.4"/><path d="M210.8 360 L207.8 363" stroke="#55a3bf" stroke-width="1.6"/><path d="M233.3 351.5 L224.5 360.3" stroke="#55a3bf" stroke-width="2.6" stroke-linecap="round"/><path d="M224.5 358.5 L226.3 360.3 L222.3 362.5 Z" fill="#c4c4c4"/><rect x="241.70000000000002" y="349" width="1.2" height="15.5" fill="#8a8a8a"/><rect x="241.0" y="352.5" width="2.6" height="8.5" fill="#9a9a9a"/><rect x="248.1" y="348.2" width="17.9" height="17.4" fill="#4fa0bd"/><rect x="251.7" y="351.6" width="11.5" height="11.2" fill="#d8d8d8" stroke="#333" stroke-width="0.6"/><rect x="252.9" y="352.8" width="2.2" height="2.2" fill="#3a3a3a"/><rect x="252.9" y="356.3" width="2.2" height="2.2" fill="#3a3a3a"/><rect x="252.9" y="359.8" width="2.2" height="2.2" fill="#3a3a3a"/><rect x="256.4" y="352.8" width="2.2" height="2.2" fill="#3a3a3a"/><rect x="256.4" y="356.3" width="2.2" height="2.2" fill="#3a3a3a"/><rect x="256.4" y="359.8" width="2.2" height="2.2" fill="#3a3a3a"/><rect x="259.9" y="352.8" width="2.2" height="2.2" fill="#3a3a3a"/><rect x="259.9" y="356.3" width="2.2" height="2.2" fill="#3a3a3a"/><rect x="259.9" y="359.8" width="2.2" height="2.2" fill="#3a3a3a"/><rect x="269.3" y="351.8" width="12.7" height="10.8" fill="#3a3a3a" stroke="#c4c4c4" stroke-width="1"/><rect x="269.3" y="354.2" width="12.7" height="0.8" fill="#c4c4c4"/><rect x="269.3" y="359.6" width="12.7" height="0.8" fill="#c4c4c4"/><rect x="287.5" y="351.6" width="13" height="10.8" fill="#363636" stroke="#c4c4c4" stroke-width="1"/><circle cx="293.9" cy="356.9" r="3" fill="#55a3bf"/><rect x="305" y="348.8" width="15.4" height="15.8" fill="#575757" stroke="#2e2e2e" stroke-width="0.8" stroke-dasharray="1 1"/><circle cx="312.7" cy="356.7" r="4" fill="#4a4a4a"/><rect x="324.5" y="351.6" width="13" height="10.8" fill="#363636" stroke="#c4c4c4" stroke-width="1"/><path d="M326 356.9 H336" stroke="#55a3bf" stroke-width="1.2" stroke-dasharray="1.5 1"/><rect x="343.2" y="351.6" width="13" height="10.8" fill="#363636" stroke="#c4c4c4" stroke-width="1"/><circle cx="352" cy="355" r="2.5" fill="#55a3bf"/><path d="M345 361.5 L347.5 357.5 L350 361.5 Z" fill="#55a3bf"/><rect x="361.5" y="351.6" width="13" height="10.8" fill="#363636" stroke="#c4c4c4" stroke-width="1"/><text x="368" y="361.5" font-family="Liberation Serif" font-weight="bold" font-size="11" fill="#55a3bf" text-anchor="middle">T</text><rect x="381.79999999999995" y="349" width="1.2" height="15.5" fill="#8a8a8a"/><rect x="381.09999999999997" y="352.5" width="2.6" height="8.5" fill="#9a9a9a"/><path d="M397.5 350 L403.5 353 L403.5 360.5 L397.5 363.8 L391.5 360.5 L391.5 353 Z" fill="none" stroke="#bdbdbd" stroke-width="1.1"/><path d="M391.5 353 L397.5 356.3 L403.5 353 M397.5 356.3 V363.8" fill="none" stroke="#bdbdbd" stroke-width="1.1"/><rect x="407.4" y="348.1" width="17.5" height="17.7" fill="#4fa0bd"/><path d="M416.1 350 L422.1 353 L422.1 360.5 L416.1 363.8 L410.1 360.5 L410.1 353 Z" fill="#4a9ab6" stroke="#2d5f70" stroke-width="1.1"/><path d="M410.1 353 L416.1 356.3 L422.1 353 M416.1 356.3 V363.8" fill="none" stroke="#2d5f70" stroke-width="1.1"/><path d="M410.5 353 L416.1 350.2 L421.7 353 L416.1 356 Z" fill="#e6e6e6"/><path d="M416.1 356.3 V363" stroke="#e6e6e6" stroke-width="1.2"/><clipPath id="cs4342"><circle cx="434.2" cy="356.8" r="6.2"/></clipPath><g clip-path="url(#cs4342)"><rect x="428.0" y="350.6" width="12.4" height="12.4" fill="#d0d0d0"/><rect x="434.6" y="352.8" width="2.2" height="2.2" fill="#262626"/><rect x="434.6" y="357.2" width="2.2" height="2.2" fill="#262626"/><rect x="434.6" y="361.6" width="2.2" height="2.2" fill="#262626"/><rect x="436.8" y="350.6" width="2.2" height="2.2" fill="#262626"/><rect x="436.8" y="355.0" width="2.2" height="2.2" fill="#262626"/><rect x="436.8" y="359.4" width="2.2" height="2.2" fill="#262626"/><rect x="436.8" y="363.8" width="2.2" height="2.2" fill="#262626"/><rect x="439.0" y="352.8" width="2.2" height="2.2" fill="#262626"/><rect x="439.0" y="357.2" width="2.2" height="2.2" fill="#262626"/><rect x="439.0" y="361.6" width="2.2" height="2.2" fill="#262626"/><rect x="441.2" y="350.6" width="2.2" height="2.2" fill="#262626"/><rect x="441.2" y="355.0" width="2.2" height="2.2" fill="#262626"/><rect x="441.2" y="359.4" width="2.2" height="2.2" fill="#262626"/><rect x="441.2" y="363.8" width="2.2" height="2.2" fill="#262626"/><rect x="428.0" y="350.6" width="6.2" height="12.4" fill="#cfcfcf"/></g><rect x="444.3" y="348.1" width="17.5" height="17.7" fill="#4fa0bd"/><path d="M453 350 L459 353 L459 360.5 L453 363.8 L447 360.5 L447 353 Z" fill="none" stroke="#cfcfcf" stroke-width="1.1"/><path d="M447 353 L453 356.3 L459 353 M453 356.3 V363.8" fill="none" stroke="#cfcfcf" stroke-width="1.1"/><clipPath id="cs4709"><circle cx="470.9" cy="356.9" r="6.3"/></clipPath><g clip-path="url(#cs4709)"><rect x="464.59999999999997" y="350.59999999999997" width="12.6" height="12.6" fill="#d0d0d0"/><rect x="464.6" y="350.6" width="2.2" height="2.2" fill="#262626"/><rect x="464.6" y="355.0" width="2.2" height="2.2" fill="#262626"/><rect x="464.6" y="359.4" width="2.2" height="2.2" fill="#262626"/><rect x="464.6" y="363.8" width="2.2" height="2.2" fill="#262626"/><rect x="466.8" y="352.8" width="2.2" height="2.2" fill="#262626"/><rect x="466.8" y="357.2" width="2.2" height="2.2" fill="#262626"/><rect x="466.8" y="361.6" width="2.2" height="2.2" fill="#262626"/><rect x="469.0" y="350.6" width="2.2" height="2.2" fill="#262626"/><rect x="469.0" y="355.0" width="2.2" height="2.2" fill="#262626"/><rect x="469.0" y="359.4" width="2.2" height="2.2" fill="#262626"/><rect x="469.0" y="363.8" width="2.2" height="2.2" fill="#262626"/><rect x="471.2" y="352.8" width="2.2" height="2.2" fill="#262626"/><rect x="471.2" y="357.2" width="2.2" height="2.2" fill="#262626"/><rect x="471.2" y="361.6" width="2.2" height="2.2" fill="#262626"/><rect x="473.4" y="350.6" width="2.2" height="2.2" fill="#262626"/><rect x="473.4" y="355.0" width="2.2" height="2.2" fill="#262626"/><rect x="473.4" y="359.4" width="2.2" height="2.2" fill="#262626"/><rect x="473.4" y="363.8" width="2.2" height="2.2" fill="#262626"/><rect x="475.6" y="352.8" width="2.2" height="2.2" fill="#262626"/><rect x="475.6" y="357.2" width="2.2" height="2.2" fill="#262626"/><rect x="475.6" y="361.6" width="2.2" height="2.2" fill="#262626"/><rect x="477.8" y="350.6" width="2.2" height="2.2" fill="#262626"/><rect x="477.8" y="355.0" width="2.2" height="2.2" fill="#262626"/><rect x="477.8" y="359.4" width="2.2" height="2.2" fill="#262626"/><rect x="477.8" y="363.8" width="2.2" height="2.2" fill="#262626"/></g><path d="M487 360 A4 4 0 1 1 492.6 360 L491.6 362 H488 Z" fill="#c4c4c4"/><rect x="488.3" y="362.3" width="3" height="1.6" fill="#c4c4c4"/><path d="M483 356.3 H484.8 M494.8 356.3 H496.6 M489.8 350 V351.5 M485.3 351.7 L486.4 352.8 M494.3 351.7 L493.2 352.8" stroke="#c4c4c4" stroke-width="1.2"/><circle cx="510.3" cy="356.5" r="4.8" fill="#55a3bf"/><path d="M501.5 358.5 L505 361.5 M502.5 357 L506.5 360.5 M503.5 355.5 L507 358.5" stroke="#c4c4c4" stroke-width="0.9"/><rect x="521.5" y="349" width="1.2" height="15.5" fill="#8a8a8a"/><rect x="520.8000000000001" y="352.5" width="2.6" height="8.5" fill="#9a9a9a"/><path d="M536.8 350.5 V362 A5.5 5.5 0 0 1 536.8 350.5 Z" fill="#c4c4c4"/><path d="M533 361 L536 363.5" stroke="#55a3bf" stroke-width="1"/><rect x="546.6" y="349" width="1.2" height="15.5" fill="#8a8a8a"/><rect x="545.9000000000001" y="352.5" width="2.6" height="8.5" fill="#9a9a9a"/></g><g transform="translate(548,0)"><rect x="-0.19999999999999996" y="349" width="1.2" height="15.5" fill="#8a8a8a"/><rect x="-0.9" y="352.5" width="2.6" height="8.5" fill="#9a9a9a"/><rect x="6.2" y="349" width="15" height="15" fill="#55a3bf"/><rect x="6.2" y="349.5" width="1.6" height="14" fill="#cfcfcf"/><rect x="7.8" y="362.3" width="13.4" height="1.6" fill="#3f7f96"/><text x="14.4" y="359.5" font-family="Liberation Sans" font-weight="bold" font-size="9" fill="#fff" text-anchor="middle">A</text><rect x="27" y="351.8" width="10" height="10.4" fill="none" stroke="#8a8a8a" stroke-width="1"/><rect x="28.5" y="352.2" width="7.5" height="9.5" fill="#55a3bf"/><circle cx="26.8" cy="351.6" r="1.2" fill="#aaa"/><circle cx="26.8" cy="362.2" r="1.2" fill="#aaa"/><circle cx="37.2" cy="351.6" r="1.2" fill="#aaa"/><circle cx="37.2" cy="362.2" r="1.2" fill="#aaa"/><rect x="43.9" y="349.8" width="14" height="13" fill="#555555"/><path d="M70 350 L76 356.5 L70 363 L64 356.5 Z" fill="#555555"/><path d="M80.5 354 L88 349.5 L95.8 350.5 L95.8 358 L88 363 L80.5 363 Z" fill="#555555"/><rect x="101.5" y="349" width="1.2" height="15.5" fill="#8a8a8a"/><rect x="100.8" y="352.5" width="2.6" height="8.5" fill="#9a9a9a"/><rect x="109.6" y="353" width="9.7" height="6.8" rx="0.8" fill="#c4c4c4"/><path d="M119.3 356.5 L124.19999999999999 352.5 L124.19999999999999 361 Z" fill="#c4c4c4"/><rect x="128.8" y="351.9" width="9.7" height="6.8" rx="0.8" fill="#c4c4c4"/><path d="M138.5 356.5 L143.4 352.5 L143.4 361 Z" fill="#c4c4c4"/><rect x="128.6" y="358" width="6" height="5" fill="#55a3bf"/><path d="M129.8 358 V356.2 A1.8 1.8 0 0 1 133.4 356.2 V358" fill="none" stroke="#55a3bf" stroke-width="1.1"/><rect x="147" y="351.9" width="9.7" height="6.8" rx="0.8" fill="#c4c4c4"/><path d="M156.7 356.5 L161.6 352.5 L161.6 361 Z" fill="#c4c4c4"/><circle cx="150.7" cy="358.3" r="2.8" fill="none" stroke="#55a3bf" stroke-width="1.8"/><path d="M169 350.8 H175.4 V362.1 L172.2 359.5 L169 362.1 Z" fill="#c4c4c4"/><path d="M184 363 L188 358 L198 358 L194 363 Z" fill="none" stroke="#c4c4c4" stroke-width="1"/><path d="M189.3 352.5 L194.7 349.8 L194.7 358.5 L189.3 361 Z" fill="#55a3bf"/><path d="M202.5 355 H209 M206.5 350 V356" stroke="#c4c4c4" stroke-width="1.4"/><path d="M202 355 L204.5 352.8 L204.5 357.2 Z M206.5 349.5 L204.3 352 L208.7 352 Z" fill="#c4c4c4"/><circle cx="212.9" cy="357.8" r="2.9" fill="none" stroke="#55a3bf" stroke-width="1.4"/><path d="M210.8 360 L207.8 363" stroke="#55a3bf" stroke-width="1.6"/><path d="M233.3 351.5 L224.5 360.3" stroke="#55a3bf" stroke-width="2.6" stroke-linecap="round"/><path d="M224.5 358.5 L226.3 360.3 L222.3 362.5 Z" fill="#c4c4c4"/><rect x="241.70000000000002" y="349" width="1.2" height="15.5" fill="#8a8a8a"/><rect x="241.0" y="352.5" width="2.6" height="8.5" fill="#9a9a9a"/><rect x="248.1" y="348.2" width="17.9" height="17.4" fill="#4fa0bd"/><rect x="251.7" y="351.6" width="11.5" height="11.2" fill="#d8d8d8" stroke="#333" stroke-width="0.6"/><rect x="252.9" y="352.8" width="2.2" height="2.2" fill="#3a3a3a"/><rect x="252.9" y="356.3" width="2.2" height="2.2" fill="#3a3a3a"/><rect x="252.9" y="359.8" width="2.2" height="2.2" fill="#3a3a3a"/><rect x="256.4" y="352.8" width="2.2" height="2.2" fill="#3a3a3a"/><rect x="256.4" y="356.3" width="2.2" height="2.2" fill="#3a3a3a"/><rect x="256.4" y="359.8" width="2.2" height="2.2" fill="#3a3a3a"/><rect x="259.9" y="352.8" width="2.2" height="2.2" fill="#3a3a3a"/><rect x="259.9" y="356.3" width="2.2" height="2.2" fill="#3a3a3a"/><rect x="259.9" y="359.8" width="2.2" height="2.2" fill="#3a3a3a"/><rect x="269.3" y="351.8" width="12.7" height="10.8" fill="#3a3a3a" stroke="#c4c4c4" stroke-width="1"/><rect x="269.3" y="354.2" width="12.7" height="0.8" fill="#c4c4c4"/><rect x="269.3" y="359.6" width="12.7" height="0.8" fill="#c4c4c4"/><rect x="287.5" y="351.6" width="13" height="10.8" fill="#363636" stroke="#c4c4c4" stroke-width="1"/><circle cx="293.9" cy="356.9" r="3" fill="#55a3bf"/><rect x="305" y="348.8" width="15.4" height="15.8" fill="#575757" stroke="#2e2e2e" stroke-width="0.8" stroke-dasharray="1 1"/><circle cx="312.7" cy="356.7" r="4" fill="#4a4a4a"/><rect x="324.5" y="351.6" width="13" height="10.8" fill="#363636" stroke="#c4c4c4" stroke-width="1"/><path d="M326 356.9 H336" stroke="#55a3bf" stroke-width="1.2" stroke-dasharray="1.5 1"/><rect x="343.2" y="351.6" width="13" height="10.8" fill="#363636" stroke="#c4c4c4" stroke-width="1"/><circle cx="352" cy="355" r="2.5" fill="#55a3bf"/><path d="M345 361.5 L347.5 357.5 L350 361.5 Z" fill="#55a3bf"/><rect x="361.5" y="351.6" width="13" height="10.8" fill="#363636" stroke="#c4c4c4" stroke-width="1"/><text x="368" y="361.5" font-family="Liberation Serif" font-weight="bold" font-size="11" fill="#55a3bf" text-anchor="middle">T</text><rect x="381.79999999999995" y="349" width="1.2" height="15.5" fill="#8a8a8a"/><rect x="381.09999999999997" y="352.5" width="2.6" height="8.5" fill="#9a9a9a"/><path d="M397.5 350 L403.5 353 L403.5 360.5 L397.5 363.8 L391.5 360.5 L391.5 353 Z" fill="none" stroke="#bdbdbd" stroke-width="1.1"/><path d="M391.5 353 L397.5 356.3 L403.5 353 M397.5 356.3 V363.8" fill="none" stroke="#bdbdbd" stroke-width="1.1"/><rect x="407.4" y="348.1" width="17.5" height="17.7" fill="#4fa0bd"/><path d="M416.1 350 L422.1 353 L422.1 360.5 L416.1 363.8 L410.1 360.5 L410.1 353 Z" fill="#4a9ab6" stroke="#2d5f70" stroke-width="1.1"/><path d="M410.1 353 L416.1 356.3 L422.1 353 M416.1 356.3 V363.8" fill="none" stroke="#2d5f70" stroke-width="1.1"/><path d="M410.5 353 L416.1 350.2 L421.7 353 L416.1 356 Z" fill="#e6e6e6"/><path d="M416.1 356.3 V363" stroke="#e6e6e6" stroke-width="1.2"/><rect x="425.5" y="348.1" width="17.5" height="17.7" fill="#4fa0bd"/><clipPath id="cs4342"><circle cx="434.2" cy="356.8" r="6.2"/></clipPath><g clip-path="url(#cs4342)"><rect x="428.0" y="350.6" width="12.4" height="12.4" fill="#d0d0d0"/><rect x="434.6" y="352.8" width="2.2" height="2.2" fill="#262626"/><rect x="434.6" y="357.2" width="2.2" height="2.2" fill="#262626"/><rect x="434.6" y="361.6" width="2.2" height="2.2" fill="#262626"/><rect x="436.8" y="350.6" width="2.2" height="2.2" fill="#262626"/><rect x="436.8" y="355.0" width="2.2" height="2.2" fill="#262626"/><rect x="436.8" y="359.4" width="2.2" height="2.2" fill="#262626"/><rect x="436.8" y="363.8" width="2.2" height="2.2" fill="#262626"/><rect x="439.0" y="352.8" width="2.2" height="2.2" fill="#262626"/><rect x="439.0" y="357.2" width="2.2" height="2.2" fill="#262626"/><rect x="439.0" y="361.6" width="2.2" height="2.2" fill="#262626"/><rect x="441.2" y="350.6" width="2.2" height="2.2" fill="#262626"/><rect x="441.2" y="355.0" width="2.2" height="2.2" fill="#262626"/><rect x="441.2" y="359.4" width="2.2" height="2.2" fill="#262626"/><rect x="441.2" y="363.8" width="2.2" height="2.2" fill="#262626"/><rect x="428.0" y="350.6" width="6.2" height="12.4" fill="#cfcfcf"/></g><rect x="444.3" y="348.1" width="17.5" height="17.7" fill="#4fa0bd"/><path d="M453 350 L459 353 L459 360.5 L453 363.8 L447 360.5 L447 353 Z" fill="none" stroke="#cfcfcf" stroke-width="1.1"/><path d="M447 353 L453 356.3 L459 353 M453 356.3 V363.8" fill="none" stroke="#cfcfcf" stroke-width="1.1"/><clipPath id="cs4709"><circle cx="470.9" cy="356.9" r="6.3"/></clipPath><g clip-path="url(#cs4709)"><rect x="464.59999999999997" y="350.59999999999997" width="12.6" height="12.6" fill="#d0d0d0"/><rect x="464.6" y="350.6" width="2.2" height="2.2" fill="#262626"/><rect x="464.6" y="355.0" width="2.2" height="2.2" fill="#262626"/><rect x="464.6" y="359.4" width="2.2" height="2.2" fill="#262626"/><rect x="464.6" y="363.8" width="2.2" height="2.2" fill="#262626"/><rect x="466.8" y="352.8" width="2.2" height="2.2" fill="#262626"/><rect x="466.8" y="357.2" width="2.2" height="2.2" fill="#262626"/><rect x="466.8" y="361.6" width="2.2" height="2.2" fill="#262626"/><rect x="469.0" y="350.6" width="2.2" height="2.2" fill="#262626"/><rect x="469.0" y="355.0" width="2.2" height="2.2" fill="#262626"/><rect x="469.0" y="359.4" width="2.2" height="2.2" fill="#262626"/><rect x="469.0" y="363.8" width="2.2" height="2.2" fill="#262626"/><rect x="471.2" y="352.8" width="2.2" height="2.2" fill="#262626"/><rect x="471.2" y="357.2" width="2.2" height="2.2" fill="#262626"/><rect x="471.2" y="361.6" width="2.2" height="2.2" fill="#262626"/><rect x="473.4" y="350.6" width="2.2" height="2.2" fill="#262626"/><rect x="473.4" y="355.0" width="2.2" height="2.2" fill="#262626"/><rect x="473.4" y="359.4" width="2.2" height="2.2" fill="#262626"/><rect x="473.4" y="363.8" width="2.2" height="2.2" fill="#262626"/><rect x="475.6" y="352.8" width="2.2" height="2.2" fill="#262626"/><rect x="475.6" y="357.2" width="2.2" height="2.2" fill="#262626"/><rect x="475.6" y="361.6" width="2.2" height="2.2" fill="#262626"/><rect x="477.8" y="350.6" width="2.2" height="2.2" fill="#262626"/><rect x="477.8" y="355.0" width="2.2" height="2.2" fill="#262626"/><rect x="477.8" y="359.4" width="2.2" height="2.2" fill="#262626"/><rect x="477.8" y="363.8" width="2.2" height="2.2" fill="#262626"/></g><path d="M487 360 A4 4 0 1 1 492.6 360 L491.6 362 H488 Z" fill="#c4c4c4"/><rect x="488.3" y="362.3" width="3" height="1.6" fill="#c4c4c4"/><path d="M483 356.3 H484.8 M494.8 356.3 H496.6 M489.8 350 V351.5 M485.3 351.7 L486.4 352.8 M494.3 351.7 L493.2 352.8" stroke="#c4c4c4" stroke-width="1.2"/><circle cx="510.3" cy="356.5" r="4.8" fill="#5a5a5a"/><path d="M501.5 358.5 L505 361.5 M502.5 357 L506.5 360.5 M503.5 355.5 L507 358.5" stroke="#5a5a5a" stroke-width="0.9"/><rect x="521.5" y="349" width="1.2" height="15.5" fill="#8a8a8a"/><rect x="520.8000000000001" y="352.5" width="2.6" height="8.5" fill="#9a9a9a"/><path d="M536.8 350.5 V362 A5.5 5.5 0 0 1 536.8 350.5 Z" fill="#c4c4c4"/><path d="M533 361 L536 363.5" stroke="#55a3bf" stroke-width="1"/><rect x="546.6" y="349" width="1.2" height="15.5" fill="#8a8a8a"/><rect x="545.9000000000001" y="352.5" width="2.6" height="8.5" fill="#9a9a9a"/></g></svg>
<svg width="10" height="677" style="position:absolute;left:535px;top:0"><path d="M4.3 449 V571" stroke="#6e6e6e" stroke-width="1" stroke-dasharray="1.3 1.7"/></svg>
</body></html>
